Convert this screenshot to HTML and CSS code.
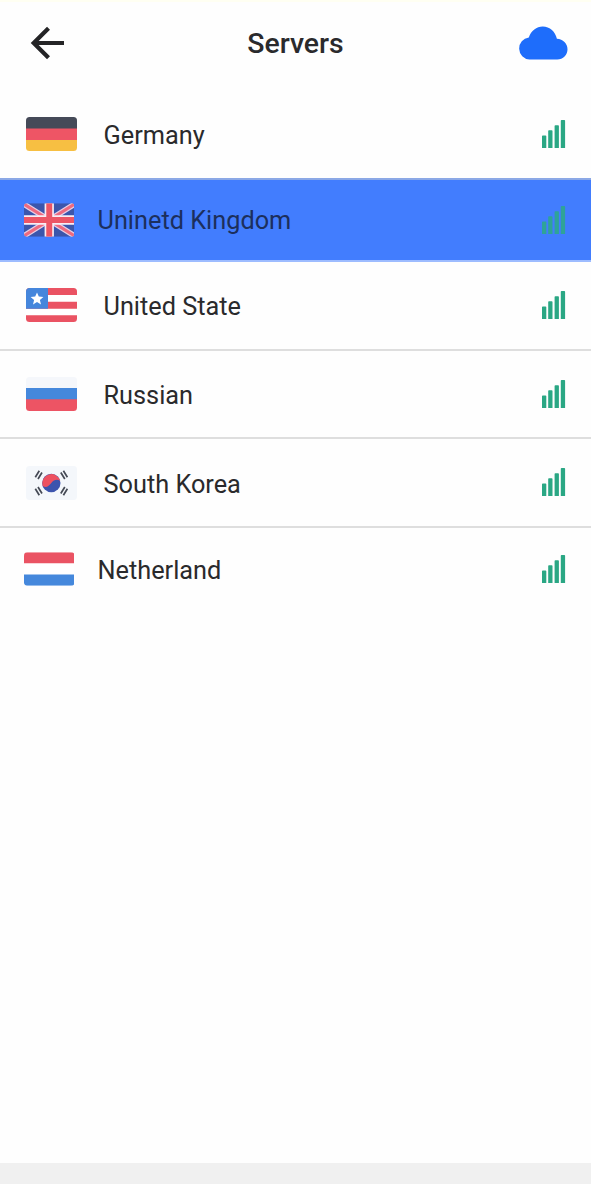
FILE: index.html
```html
<!DOCTYPE html>
<html lang="en">
<head>
<meta charset="utf-8">
<title>Servers</title>
<link rel="stylesheet" href="styles.css">
</head>
<body>
<svg class="defs" aria-hidden="true">
  <symbol id="signal" viewBox="0 0 24 29">
    <path fill="currentColor" d="M0 16.300a.8.8 0 0 1 .8-.8h2.700a.8.8 0 0 1 .8.800V28H0zM6.200 11a.8.8 0 0 1 .8-.8h2.700a.8.8 0 0 1 .800.800V28H6.200zM12.600 6a.8.8 0 0 1 .8-.8h2.700a.8.8 0 0 1 .8.8V28h-4.300zM18.800.8a.8.8 0 0 1 .8-.8h2.700a.8.8 0 0 1 .8.800V28h-4.300z"/>
  </symbol>
  <clipPath id="flag-shape"><rect width="51" height="34" rx="3.500"/></clipPath>
</svg>
<div class="screen">
  <header class="header">
    <svg class="back" viewBox="0 0 36 36"><path d="M34 18H4M18.500 3.200 3.700 18l14.800 14.800" fill="none" stroke="#242426" stroke-width="4.200"/></svg>
    <h1 class="title">Servers</h1>
    <svg class="cloud" viewBox="0 0 50 34"><path fill="#1e6dfb" d="M11.500 33.500A11 11 0 0 1 10.800 11.600C13.200 4.500 18.500.5 24.700.5c7.200 0 12.700 5.200 14.200 12.300C45 13.200 49.500 17.500 49.500 23.200c0 5.800-4.300 10.300-10.300 10.300z"/></svg>
  </header>
  <ul class="servers">
    <li class="row germany">
      <svg class="flag" viewBox="0 0 51 34"><g clip-path="url(#flag-shape)"><path fill="#454a58" d="M0 0h51v12H0z"/><path fill="#ee5565" d="M0 11.500h51v12H0z"/><path fill="#f7bf42" d="M0 23h51v11H0z"/></g></svg>
      <span class="name">Germany</span>
      <svg class="signal"><use href="#signal"/></svg>
    </li>
    <li class="row kingdom active">
      <svg class="flag" viewBox="0 0 51 34"><g clip-path="url(#flag-shape)"><path fill="#3b56ac" d="M0 0h51v34H0z"/><path stroke="#e6cfe6" stroke-width="5.600" d="m0 1 51 32M51 1 0 33"/><path stroke="#ee6a80" stroke-width="3.200" d="m0 1 51 32M51 1 0 33"/><path stroke="#f8edf5" stroke-width="9.400" d="M25.500 0v34M0 17h51"/><path stroke="#ed5565" stroke-width="6" d="M25.500 0v34M0 17h51"/></g></svg>
      <span class="name">Uninetd Kingdom</span>
      <svg class="signal"><use href="#signal"/></svg>
    </li>
    <li class="row states">
      <svg class="flag" viewBox="0 0 51 34"><g clip-path="url(#flag-shape)"><path fill="#fff" d="M0 0h51v34H0z"/><path fill="#ea5363" d="M0 0h51v7H0zM0 13.800h51v6.900H0zM0 27.200h51V34H0z"/><path fill="#4586dc" d="M0 0h22v20.800H0z"/><path fill="#fff" d="m11 4.400 1.800 4.200 4.600.4-3.500 3 1.100 4.500-4-2.400-4 2.400L8.100 12 4.600 9l4.600-.4z"/></g></svg>
      <span class="name">United State</span>
      <svg class="signal"><use href="#signal"/></svg>
    </li>
    <li class="row russian">
      <svg class="flag" viewBox="0 0 51 34"><g clip-path="url(#flag-shape)"><path fill="#f5f7fb" d="M0 0h51v11.500H0z"/><path fill="#4588dc" d="M0 11h51v12H0z"/><path fill="#ed5464" d="M0 22.300h51V34H0z"/></g></svg>
      <span class="name">Russian</span>
      <svg class="signal"><use href="#signal"/></svg>
    </li>
    <li class="row korea">
      <svg class="flag" viewBox="0 0 51 34"><rect fill="#f4f7fb" width="51" height="34" rx="3.500"/><g transform="translate(25.300 17)"><circle r="9.200" fill="#3c54ad"/><path fill="#ee5160" d="M-8.800 2.700A9.200 9.200 0 1 1 9-2C6-4.300 2.500-3.200 0 0S-5.500 5.500-8.800 2.700z"/></g><g fill="none" stroke="#454a55" stroke-width="1.700"><path d="m9.300 11.300 4-6.500M12 13l4-6.500M34.800 6.500l4 6.500M37.400 4.800l4 6.500M9.300 22.700l4 6.500M12 21l4 6.500M34.800 27.500l4-6.500M37.400 29.200l4-6.500"/></g></svg>
      <span class="name">South Korea</span>
      <svg class="signal"><use href="#signal"/></svg>
    </li>
    <li class="row netherland">
      <svg class="flag" viewBox="0 0 51 34"><g clip-path="url(#flag-shape)"><path fill="#fff" d="M0 0h51v34H0z"/><path fill="#ea5363" d="M0 0h51v11.300H0z"/><path fill="#4588dc" d="M0 22.500h51V34H0z"/></g></svg>
      <span class="name">Netherland</span>
      <svg class="signal"><use href="#signal"/></svg>
    </li>
  </ul>
  <footer class="navbar"></footer>
</div>
</body>
</html>
```
FILE: styles.css
```css
* { box-sizing: border-box; }

body {
  margin: 0;
  background: #fefefe;
  color: #2a2a2c;
  font-family: Roboto, "Liberation Sans", sans-serif;
}

.defs { position: absolute; width: 0; height: 0; }

.screen {
  display: flex;
  flex-direction: column;
  height: 1184px;
  border-top: 2px solid #fffff2;
}

.header {
  display: grid;
  grid-template-columns: 50px 1fr 50px;
  align-items: center;
  height: 88px;
  padding: 0 23px 6px 30px;
}

.back { width: 36px; height: 36px; }

.title {
  margin: 0;
  padding: 2px 7px 0 0;
  text-align: center;
  font-size: 28.400px;
  font-weight: 500;
  line-height: 34px;
}

.cloud { width: 50px; height: 34px; }

.servers { flex: 1; margin: 0; padding: 0; list-style: none; }

.row {
  display: flex;
  align-items: center;
  height: 88px;
  padding: 0 25px 0 26px;
  border-bottom: 2px solid #dedede;
}

.flag { width: 51px; height: 34px; }

.name {
  flex: 1;
  padding: 3px 0 0 26.500px;
  font-size: 25.300px;
  line-height: 32px;
}

.signal { width: 24px; height: 29px; color: #2aa784; }

.germany { height: 90px; border-color: #8ba8e6; }
.kingdom, .netherland { padding-left: 23.500px; }
.kingdom .flag, .netherland .flag { width: 50.500px; }
.kingdom { height: 82px; border-color: #9dbcff; }
.active { background: #427dfe; }
.active .name { padding-top: 2px; padding-left: 23.500px; color: #1c2f5c; }
.active .signal { color: #2fa398; }
.states { height: 89px; padding-bottom: 1px; }
.states .name, .korea .name { padding-top: 4px; }
.korea { height: 89px; }
.netherland { height: 83px; padding-bottom: 2px; border-bottom: 0; }
.netherland .name { padding-top: 4px; padding-left: 23.500px; }
.netherland .signal { margin-top: 2px; }

.navbar { height: 21px; background: #f0f0f0; }
```
